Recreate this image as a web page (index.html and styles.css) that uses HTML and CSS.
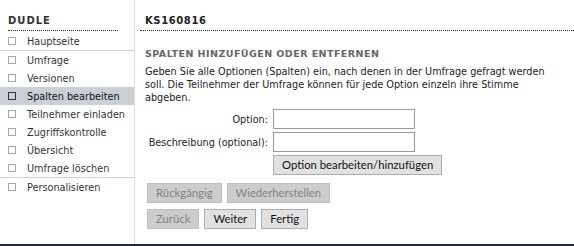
FILE: index.html
```html
<!DOCTYPE html>
<html lang="de">
<head>
<meta charset="utf-8">
<title>Dudle</title>
<link rel="stylesheet" href="styles.css">
</head>
<body>
<div class="page">
  <aside class="sidebar">
    <h2 class="side-title">DUDLE</h2>
    <ul class="nav nav-top">
      <li><span class="box"></span>Hauptseite</li>
    </ul>
    <ul class="nav nav-mid">
      <li><span class="box"></span>Umfrage</li>
      <li><span class="box"></span>Versionen</li>
      <li class="active"><span class="box"></span>Spalten bearbeiten</li>
      <li><span class="box"></span>Teilnehmer einladen</li>
      <li><span class="box"></span>Zugriffskontrolle</li>
      <li><span class="box"></span>Übersicht</li>
      <li><span class="box"></span>Umfrage löschen</li>
    </ul>
    <ul class="nav">
      <li><span class="box"></span>Personalisieren</li>
    </ul>
  </aside>
  <main class="main">
    <h1 class="poll-title">KS160816</h1>
    <div class="content">
      <h2 class="section-title">SPALTEN HINZUFÜGEN ODER ENTFERNEN</h2>
      <p class="intro">Geben Sie alle Optionen (Spalten) ein, nach denen in der Umfrage gefragt werden soll. Die Teilnehmer der Umfrage können für jede Option einzeln ihre Stimme abgeben.</p>
      <form class="form">
        <label class="lbl" for="opt">Option:</label>
        <input class="field" id="opt" type="text">
        <label class="lbl" for="desc">Beschreibung (optional):</label>
        <input class="field" id="desc" type="text">
        <span></span>
        <div><button type="button" class="btn">Option bearbeiten/hinzufügen</button></div>
      </form>
      <div class="btn-row btn-row-first">
        <button type="button" class="btn" disabled>Rückgängig</button>
        <button type="button" class="btn" disabled>Wiederherstellen</button>
      </div>
      <div class="btn-row">
        <button type="button" class="btn" disabled>Zurück</button>
        <button type="button" class="btn">Weiter</button>
        <button type="button" class="btn">Fertig</button>
      </div>
    </div>
  </main>
</div>
</body>
</html>
```

FILE: styles.css
```css
html, body {
  margin: 0;
  padding: 0;
  background: #fff;
}
body {
  font-family: "DejaVu Sans", Verdana, sans-serif;
  font-size: 9.7px;
  color: #222;
}
.page {
  display: flex;
  height: 244px;
  border-bottom: 2px solid #1e2b3d;
  overflow: hidden;
}
.sidebar {
  width: 134px;
  flex: none;
  border-right: 1px solid #dcdcdc;
  padding-top: 15px;
}
.side-title {
  margin: 0 16px 0 8px;
  font-size: 10px;
  font-weight: bold;
  letter-spacing: 1px;
  color: #333;
  line-height: 12px;
  padding-bottom: 3px;
  border-bottom: 1px dotted #333;
}
.nav {
  list-style: none;
  margin: 0;
  padding: 0;
}
.nav-top {
  margin-top: 1px;
  border-bottom: 1px solid #cfcfcf;
}
.nav-mid {
  border-bottom: 1px solid #cfcfcf;
}
.nav li {
  display: flex;
  align-items: center;
  height: 18px;
  padding-left: 8px;
  color: #333;
  white-space: nowrap;
}
.nav li.active {
  background: #c9d0d8;
  color: #111;
}
.box {
  width: 6px;
  height: 6px;
  border: 1px solid #a8a8a8;
  margin-right: 11px;
  flex: none;
}
.active .box {
  border-color: #333;
}
.main {
  flex: 1;
  padding-left: 5px;
  padding-top: 15px;
}
.poll-title {
  margin: 0;
  font-size: 10px;
  font-weight: bold;
  letter-spacing: 0.6px;
  color: #222;
  line-height: 12px;
  padding: 0 0 3px 5px;
  border-bottom: 1px dotted #333;
}
.content {
  padding-left: 5px;
}
.section-title {
  margin: 17px 0 0;
  font-size: 9.5px;
  font-weight: bold;
  letter-spacing: 0.45px;
  color: #666;
  line-height: 12px;
}
.intro {
  margin: 5px 0 0;
  line-height: 13px;
  color: #222;
  max-width: 420px;
}
.form {
  display: grid;
  grid-template-columns: 123px auto;
  justify-content: start;
  column-gap: 5px;
  row-gap: 3px;
  align-items: center;
  margin-top: 5px;
}
.lbl {
  text-align: right;
  white-space: nowrap;
  color: #222;
}
.field {
  width: 142px;
  height: 20px;
  box-sizing: border-box;
  border: 1px solid #9a9a9a;
  margin: 0;
  padding: 0 2px;
  font: inherit;
}
.btn {
  font-family: Lato, "Liberation Sans", sans-serif;
  font-size: 11.3px;
  height: 20px;
  box-sizing: border-box;
  padding: 0 8px;
  margin: 0;
  background: #e1e1e1;
  border: 1px solid #adadad;
  color: #111;
  line-height: 18px;
}
.btn:disabled {
  background: #cccccc;
  border-color: #bfbfbf;
  color: #838383;
}
.btn-row {
  display: flex;
  gap: 5px;
  margin-top: 6px;
  padding-left: 2px;
}
.btn-row-first {
  margin-top: 8px;
}
```
